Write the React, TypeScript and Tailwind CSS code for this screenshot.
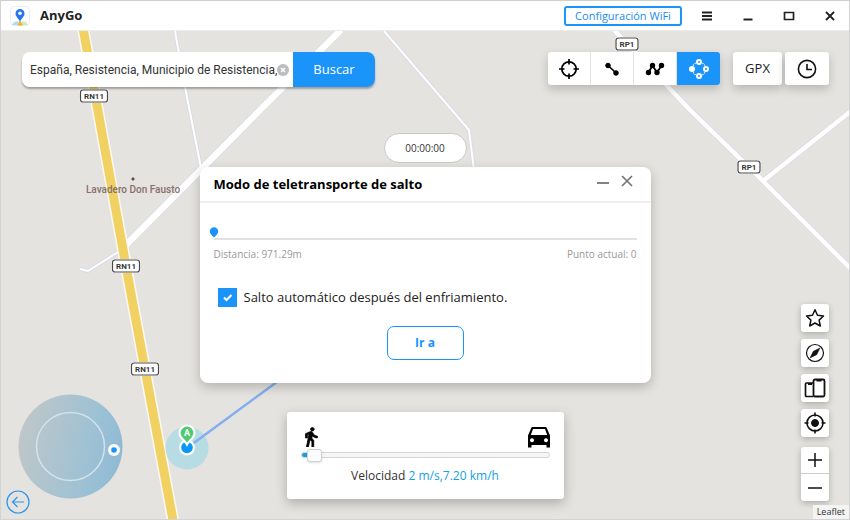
import { useState } from 'react';
import type { ReactNode } from 'react';

function Shield({ x, y, label, width }: { x: number; y: number; label: string; width: number }) {
  return (
    <g>
      <rect x={x - width / 2 - 1} y={y - 7} width={width + 2} height="14" rx="3" fill="#fff" />
      <rect x={x - width / 2} y={y - 6} width={width} height="12" rx="2.5" fill="#fff" stroke="#4a4a4c" strokeWidth="1.2" />
      <text x={x} y={y + 3} textAnchor="middle" fontSize="8" fontWeight="700" fill="#38383a">
        {label}
      </text>
    </g>
  );
}

function MapCanvas() {
  return (
    <svg
      className="absolute inset-0 h-full w-full font-['Roboto',sans-serif]"
      viewBox="1 31 848 488"
      preserveAspectRatio="xMinYMin slice"
      aria-label="Mapa"
      role="img"
    >
      <rect y="31" width="850" height="489" fill="#e5e3df" />

      {/* side roads */}
      <g fill="none" strokeLinejoin="round">
        <g stroke="#d9dbe6">
          <path d="M175 31L185 87L201 168" strokeWidth="4" />
          <path d="M384 31L469 130L474 170" strokeWidth="4" />
          <path d="M80 269L88 271L118 252L128 243" strokeWidth="4" />
          <path d="M614 30L690 110L763 181L851 269M763 181L851 111" strokeWidth="6" />
          <path d="M341 30L260 110L126 245" strokeWidth="8" />
        </g>
        <g stroke="#fff">
          <path d="M175 31L185 87L201 168" strokeWidth="2" />
          <path d="M384 31L469 130L474 170" strokeWidth="2" />
          <path d="M80 269L88 271L118 252L128 243" strokeWidth="2" />
          <path d="M614 30L690 110L763 181L851 269M763 181L851 111" strokeWidth="4.5" />
          <path d="M341 30L260 110L126 245" strokeWidth="6.5" />
        </g>
      </g>

      {/* RN11 */}
      <path d="M83 28L128.5 280L173.500 523" fill="none" stroke="#faf9f6" strokeWidth="12" />
      <path d="M83 28L128.5 280L173.500 523" fill="none" stroke="#f2d163" strokeWidth="9" />

      <Shield x={94} y={96} label="RN11" width={27} />
      <Shield x={126} y={266} label="RN11" width={27} />
      <Shield x={145} y={369} label="RN11" width={27} />
      <Shield x={627} y={44} label="RP1" width={22} />
      <Shield x={749} y={167} label="RP1" width={22} />

      <circle cx="133" cy="179" r="2.2" fill="#fff" />
      <circle cx="133" cy="179" r="1.700" fill="#6b4a3e" />
      <text x="133" y="193" textAnchor="middle" fontSize="10" fontWeight="500" fill="#87706a">
        Lavadero Don Fausto
      </text>

      {/* route and current position */}
      <circle cx="187" cy="448" r="21.5" fill="#b7dce3" />
      <path d="M187 448L300 365" stroke="#84aef0" strokeWidth="2.5" />
      <circle cx="187" cy="447.500" r="8" fill="#fff" />
      <circle cx="187" cy="447.500" r="5.800" fill="#0a97f5" />
      <path
        d="M187 444.500C185 440.500 179.500 438 179.500 433a7.500 7.500 0 0 1 15 0C194.500 438 189 440.500 187 444.500Z"
        fill="#4ecb71"
        stroke="#fff"
        strokeWidth="2.200"
      />
      <text x="187" y="436" textAnchor="middle" fontSize="9" fontWeight="700" fill="#fff">
        A
      </text>
    </svg>
  );
}

function TitleBar() {
  return (
    <header className="flex h-[31px] items-center border-t border-b border-t-[#cfcfcf] border-b-[#ececec] bg-white pr-[11px] pl-[9px]">
      <svg className="h-5 w-5" viewBox="0 0 20 20" aria-hidden="true">
        <rect x=".5" y=".5" width="19" height="19" rx="4" fill="#fff" stroke="#ececec" />
        <path d="M2 19l2-3 4-1 1 4z" fill="#a9dff2" />
        <path d="M18 19l-2-3-4-1-1 4z" fill="#cdeeb0" />
        <path d="M7.500 19.500L9.500 15h1l2.500 4.500z" fill="#f8ab28" />
        <path d="M10 16C9 12.500 5.500 11 5.500 7.500a4.500 4.500 0 0 1 9 0C14.500 11 11 12.500 10 16z" fill="#2575ec" />
        <circle cx="10" cy="7.300" r="1.800" fill="#fff" />
      </svg>
      <h1 className="ml-[10px] flex-1 text-[13px] font-bold text-[#222]">AnyGo</h1>
      <button className="h-5 w-[118px] rounded-[3px] border-2 border-[#1a94f8] text-[11px] leading-none whitespace-nowrap text-[#1a8cf0]">
        Configuración WiFi
      </button>
      <div className="ml-[17px] flex gap-[25px] text-[#222]">
        <WindowButton label="Menú">
          <path d="M3 4.500h10M3 8h10M3 11.500h10" strokeWidth="1.800" />
        </WindowButton>
        <WindowButton label="Minimizar">
          <path d="M3.500 11.500h9" strokeWidth="2" />
        </WindowButton>
        <WindowButton label="Maximizar">
          <path d="M3.500 4.500h9v7h-9z" strokeWidth="1.700" />
        </WindowButton>
        <WindowButton label="Cerrar">
          <path d="M4 4l8 8M12 4l-8 8" strokeWidth="1.800" />
        </WindowButton>
      </div>
    </header>
  );
}

function WindowButton({ label, children }: { label: string; children: ReactNode }) {
  return (
    <button aria-label={label}>
      <svg className="h-4 w-4" viewBox="0 0 16 16" fill="none" stroke="currentColor">
        {children}
      </svg>
    </button>
  );
}

function SearchBar() {
  const [query, setQuery] = useState('España, Resistencia, Municipio de Resistencia,');

  return (
    <form className="flex h-[35px] rounded-lg shadow-[0_2px_2px_rgba(0,0,0,0.3)]" onSubmit={(e) => e.preventDefault()}>
      <div className="flex w-[271px] items-center rounded-l-lg bg-white pr-1 pl-2">
        <input
          aria-label="Buscar lugar"
          className="w-full min-w-0 flex-1 bg-transparent font-['Roboto',sans-serif] text-[12px] text-[#333] outline-none"
          value={query}
          onChange={(e) => setQuery(e.target.value)}
        />
        <button type="button" aria-label="Borrar" onClick={() => setQuery('')}>
          <svg className="h-3 w-3" viewBox="0 0 12 12">
            <circle cx="6" cy="6" r="6" fill="#bdbdbd" />
            <path d="M4 4l4 4M8 4L4 8" stroke="#fff" strokeWidth="1.600" />
          </svg>
        </button>
      </div>
      <button className="w-[82px] rounded-r-lg bg-[#1a94f8] text-[13px] text-white">Buscar</button>
    </form>
  );
}

const MODES = [
  {
    id: 'teleport',
    label: 'Teletransporte',
    icon: (
      <g fill="none" stroke="currentColor" strokeWidth="1.700">
        <circle cx="11" cy="11" r="7.200" />
        <path d="M11 1v5.500M11 15.500V21M1 11h5.500M15.500 11H21" />
      </g>
    ),
  },
  {
    id: 'two-spot',
    label: 'Ruta de dos puntos',
    icon: (
      <g fill="currentColor" stroke="currentColor">
        <path d="M7 7.500l8 7.500" strokeWidth="1.700" />
        <circle cx="7" cy="7.500" r="2.300" />
        <circle cx="15" cy="15" r="2.300" />
      </g>
    ),
  },
  {
    id: 'multi-spot',
    label: 'Ruta de varios puntos',
    icon: (
      <g fill="currentColor" stroke="currentColor" strokeWidth="1.800">
        <path d="M4.500 14.500L8.500 7.500L13 14.500L17.500 7.500" fill="none" />
        <circle cx="4.500" cy="14.500" r="1.800" />
        <circle cx="8.500" cy="7.500" r="1.800" />
        <circle cx="13" cy="14.500" r="1.800" />
        <circle cx="17.500" cy="7.500" r="1.800" />
      </g>
    ),
  },
  {
    id: 'jump',
    label: 'Teletransporte de salto',
    icon: (
      <g fill="none" stroke="currentColor" strokeWidth="2">
        <circle cx="4" cy="11" r="2" fill="currentColor" />
        <circle cx="11" cy="4" r="2" />
        <circle cx="18" cy="11" r="2" />
        <circle cx="11" cy="18" r="2" />
        <path d="M5 7.500L7.500 5M14.500 5L17 7.500M17 14.500L14.500 17M7.500 17L5 14.500" strokeWidth="1.200" strokeDasharray="1.200 1.200" />
      </g>
    ),
  },
];

function Toolbar() {
  const [mode, setMode] = useState('jump');

  return (
    <div className="flex h-[33px]">
      <div className="mr-[13px] flex divide-x divide-[#e4e4e4] overflow-hidden rounded-[3px] bg-white shadow-[0_4px_10px_rgba(0,0,0,0.2)]">
        {MODES.map((m) => (
          <button
            key={m.id}
            aria-label={m.label}
            aria-pressed={mode === m.id}
            onClick={() => setMode(m.id)}
            className={`flex w-[43px] items-center justify-center ${mode === m.id ? 'bg-[#1a94f8] text-white' : 'text-black'}`}
          >
            <svg className="h-[22px] w-[22px]" viewBox="0 0 22 22">
              {m.icon}
            </svg>
          </button>
        ))}
      </div>
      <button className="mr-[3px] w-[49px] rounded-[3px] bg-white text-[13px] text-[#222] shadow-[0_4px_10px_rgba(0,0,0,0.2)]">
        GPX
      </button>
      <button
        aria-label="Historial"
        className="flex w-11 items-center justify-center rounded-[3px] bg-white shadow-[0_4px_10px_rgba(0,0,0,0.2)]"
      >
        <svg className="h-5 w-5" viewBox="0 0 20 20" fill="none" stroke="#111" strokeWidth="1.600">
          <circle cx="10" cy="10" r="8.600" />
          <path d="M10 5v5.500h5" />
        </svg>
      </button>
    </div>
  );
}

function JumpDialog() {
  const [auto, setAuto] = useState(true);

  return (
    <section
      role="dialog"
      aria-labelledby="jump-title"
      className="mt-1 w-[451px] max-w-full rounded-lg bg-white pb-[23px] shadow-[0_4px_12px_rgba(0,0,0,0.22)]"
    >
      <div className="flex h-9 items-center border-b-2 border-[#f0f0f0] pr-[17px] pl-[14px]">
        <h2 id="jump-title" className="flex-1 pt-px text-[13px] font-bold text-black">
          Modo de teletransporte de salto
        </h2>
        <div className="flex gap-[10px] pb-[6px] text-[#757575]">
          <button aria-label="Minimizar">
            <svg className="h-[14px] w-[14px]" viewBox="0 0 14 14" stroke="currentColor" strokeWidth="1.800">
              <path d="M1 9h12" />
            </svg>
          </button>
          <button aria-label="Cerrar">
            <svg className="h-[14px] w-[14px]" viewBox="0 0 14 14" stroke="currentColor" strokeWidth="1.700">
              <path d="M2 2l10 10M12 2L2 12" />
            </svg>
          </button>
        </div>
      </div>

      <div className="px-[14px] pt-6">
        <div className="border-b-2 border-[#e2e2e2]">
          <svg className="-ml-[5px] h-[11px] w-[10px]" viewBox="0 0 10 11" aria-hidden="true">
            <path d="M5 10.500C4 9 .8 7 .8 4.400a4.200 4.200 0 0 1 8.400 0C9.200 7 6 9 5 10.500z" fill="#1a94f8" />
          </svg>
        </div>
        <div className="mt-[7px] flex justify-between text-[10px] leading-[14px] text-[#999]">
          <span>Distancia: 971.29m</span>
          <span>Punto actual: 0</span>
        </div>

        <label className="mt-6 ml-1 flex items-center gap-[7px] text-[13px] leading-6 text-[#222]">
          <span className="relative flex">
            <input
              type="checkbox"
              checked={auto}
              onChange={(e) => setAuto(e.target.checked)}
              className="h-[19px] w-[19px] appearance-none border border-[#1a94f8] checked:bg-[#1a94f8]"
            />
            {auto && (
              <svg className="pointer-events-none absolute inset-0 h-full w-full" viewBox="0 0 19 19" fill="none">
                <path d="M6 9.500l2.500 2.500L13.500 7" stroke="#fff" strokeWidth="2" />
              </svg>
            )}
          </span>
          Salto automático después del enfriamiento.
        </label>

        <button className="mx-auto mt-[17px] block h-[34px] w-[77px] rounded-[7px] border border-[#1a94f8] text-[12px] font-bold text-[#1a94f8]">
          Ir a
        </button>
      </div>
    </section>
  );
}

const MAX_SPEED = 80;

function SpeedPanel() {
  const [speed, setSpeed] = useState(2);

  return (
    <section className="mt-[29px] w-[277px] rounded-[3px] bg-white px-[14px] pt-[14px] pb-[13px] shadow-[0_4px_12px_rgba(0,0,0,0.25)]">
      <div className="flex items-center justify-between">
        <svg className="h-5 w-5" viewBox="1 1 22 22" aria-hidden="true">
          <path d="M13.500 5.500c1.100 0 2-.9 2-2s-.9-2-2-2-2 .9-2 2 .9 2 2 2zM9.800 8.900L7 23h2.100l1.800-8 2.100 2v6h2v-7.500l-2.100-2 .6-3C14.800 12 16.800 13 19 13v-2c-1.900 0-3.500-1-4.300-2.400l-1-1.600c-.4-.6-1-1-1.700-1-.3 0-.5.100-.8.100L6 8.300V13h2V9.600l1.800-.7" stroke="#000" strokeWidth=".9" />
        </svg>
        <svg className="h-[22px] w-[22px]" viewBox="0 0 22 22" aria-hidden="true">
          <path
            fillRule="evenodd"
            d="M4.500 1h13q1 0 1.300 1L22 9.500V21.500h-3.500V19h-15v2.500H0V9.500L3.200 2Q3.500 1 4.500 1zM5 3L2.800 9h16.400L17 3zM4 12.300a2 2 0 1 0 .01 0zM18 12.300a2 2 0 1 0 .01 0z"
          />
        </svg>
      </div>
      <input
        type="range"
        aria-label="Velocidad"
        min={0}
        max={MAX_SPEED}
        value={speed}
        onChange={(e) => setSpeed(Number(e.target.value))}
        style={{ backgroundImage: `linear-gradient(to right, #14a0e8 ${(speed / MAX_SPEED) * 100 + 1}%, #f6f6f6 0)` }}
        className="my-1 block h-[6px] w-full appearance-none rounded-[3px] border border-[#d5d5d5] [&::-webkit-slider-thumb]:h-[13px] [&::-webkit-slider-thumb]:w-[15px] [&::-webkit-slider-thumb]:appearance-none [&::-webkit-slider-thumb]:rounded-[3px] [&::-webkit-slider-thumb]:border [&::-webkit-slider-thumb]:border-[#d0d0d0] [&::-webkit-slider-thumb]:bg-[#fcfcfc] [&::-webkit-slider-thumb]:shadow-sm"
      />
      <p className="mt-2 text-center text-[12px] leading-5 text-[#333]">
        Velocidad{' '}
        <span className="text-[#14a0e8]">
          {speed} m/s,{(speed * 3.6).toFixed(2)} km/h
        </span>
      </p>
    </section>
  );
}

function Joystick() {
  return (
    <div className="absolute bottom-[5px] left-[5px]">
      <svg className="ml-3 h-[105px] w-[105px]" viewBox="0 0 105 105" role="img" aria-label="Joystick">
        <defs>
          <linearGradient id="pad" x1="0" y1=".4" x2="1" y2=".6">
            <stop offset="0" stopColor="#bfc7c9" />
            <stop offset=".7" stopColor="#9dc1d4" />
            <stop offset="1" stopColor="#8fbad5" />
          </linearGradient>
        </defs>
        <circle cx="52.500" cy="52.500" r="52" fill="url(#pad)" />
        <circle cx="52.500" cy="52.500" r="34" fill="none" stroke="#d4e3eb" strokeWidth="1.500" />
        <circle cx="96" cy="56" r="6" fill="#fff" />
        <circle cx="96" cy="56" r="2.800" fill="#1a94f8" />
      </svg>
      <button aria-label="Volver" className="-mt-[9px] block">
        <svg className="h-6 w-6" viewBox="0 0 24 24" fill="none" stroke="#2b95ee" strokeWidth="1.200">
          <circle cx="12" cy="12" r="11" />
          <path d="M18 12H6.500M11.500 7l-5 5l5 5" />
        </svg>
      </button>
    </div>
  );
}

function SideButton({ label, children }: { label: string; children: ReactNode }) {
  return (
    <button
      aria-label={label}
      className="flex h-7 w-7 items-center justify-center rounded-[3px] bg-white shadow-[0_2px_6px_rgba(0,0,0,0.25)]"
    >
      <svg className="h-[22px] w-[22px]" viewBox="0 0 22 22" fill="none" stroke="#111" strokeWidth="1.500">
        {children}
      </svg>
    </button>
  );
}

function SideTools() {
  return (
    <div className="absolute right-[20px] bottom-[18px] flex flex-col gap-[7px]">
      <SideButton label="Favoritos">
        <path d="M11 2.800l2.500 5.500 6 .7-4.400 4.100 1.200 5.900L11 16l-5.300 3 1.200-5.900L2.500 9l6-.7z" strokeLinejoin="round" />
      </SideButton>
      <SideButton label="Brújula">
        <circle cx="11" cy="11" r="8.500" strokeWidth="1.200" />
        <path d="M16 6l-3.300 6.700L6 16l3.300-6.700z" fill="#111" strokeWidth=".5" />
      </SideButton>
      <SideButton label="Dispositivos">
        <path d="M9.500 19.500H2.500q-1 0-1-1V7q0-1 1-1h7" strokeWidth="1.700" />
        <rect x="9.500" y="2.500" width="11" height="17" rx="1.500" strokeWidth="1.800" />
        <path d="M12.500 3.500h5M4 7h4" strokeWidth="2" />
      </SideButton>
      <SideButton label="Centrar">
        <circle cx="11" cy="11" r="8" strokeWidth="1.600" />
        <circle cx="11" cy="11" r="3.500" fill="#111" strokeWidth="1" />
        <path d="M11 .5v4M11 17.500v4M.5 11h4M17.500 11h4" strokeWidth="1.600" />
      </SideButton>
      <div className="mt-[3px] flex flex-col divide-y divide-[#ccc] rounded-[3px] bg-white shadow-[0_2px_6px_rgba(0,0,0,0.25)]">
        <button aria-label="Acercar" className="flex h-[27px] w-7 items-center justify-center">
          <svg className="h-[14px] w-[14px]" viewBox="0 0 14 14" stroke="#111" strokeWidth="1.500">
            <path d="M0 7h14M7 0v14" />
          </svg>
        </button>
        <button aria-label="Alejar" className="flex h-[27px] w-7 items-center justify-center">
          <svg className="h-[14px] w-[14px]" viewBox="0 0 14 14" stroke="#111" strokeWidth="1.500">
            <path d="M0 7h14" />
          </svg>
        </button>
      </div>
    </div>
  );
}

export default function App() {
  return (
    <div className="flex min-h-screen flex-col border-x border-b border-[#d3d3d5] font-['Open_Sans',sans-serif]">
      <TitleBar />
      <main className="relative flex flex-1 flex-col">
        <MapCanvas />
        <div className="relative flex items-start justify-between pt-[21px] pr-5 pl-[21px]">
          <SearchBar />
          <Toolbar />
        </div>
        <div className="relative flex flex-col items-center pt-[46px] pb-4">
          <time className="flex h-[30px] w-[83px] items-center justify-center rounded-full border border-[#c9c9c9] bg-white text-[10px] text-[#333]">
            00:00:00
          </time>
          <JumpDialog />
          <SpeedPanel />
        </div>
        <Joystick />
        <SideTools />
        <a href="#leaflet" className="absolute right-0 bottom-0 bg-[#f4f4f3] px-1 text-[9px] leading-[14px] text-[#333]">
          Leaflet
        </a>
      </main>
    </div>
  );
}
